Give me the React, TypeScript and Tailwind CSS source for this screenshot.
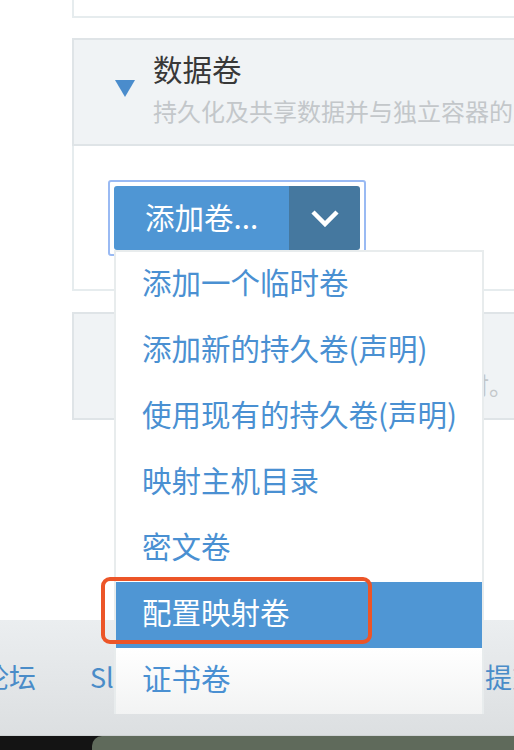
import React from "react";

const VOLUME_OPTIONS = [
  "添加一个临时卷",
  "添加新的持久卷(声明)",
  "使用现有的持久卷(声明)",
  "映射主机目录",
  "密文卷",
  "配置映射卷",
  "证书卷",
];

const ACTIVE = 5;

function Caret() {
  return (
    <svg width="20" height="17" viewBox="0 0 20 17" className="shrink-0" aria-hidden>
      <polygon points="0,0 20,0 10,17" fill="#4a8ccc" />
    </svg>
  );
}

function PanelHeader({ title, subtitle }: { title: string; subtitle: string }) {
  return (
    <div className="flex h-[104px] items-center bg-[#f0f3f5] pl-[41px] pb-[8px]">
      <Caret />
      <div className="ml-[18px] flex flex-col whitespace-nowrap">
        <span className="text-[29.5px] leading-[36px] text-[#383838]">{title}</span>
        <span className="mt-[9px] text-[24px] leading-[32px] text-[#c3c7ca]">{subtitle}</span>
      </div>
    </div>
  );
}

export default function App() {
  return (
    <div className="relative flex h-[750px] w-[514px] flex-col overflow-hidden bg-white font-['Noto_Sans_CJK_SC','Noto_Sans',sans-serif]">
      <main className="flex-1">
        <div className="ml-[72px] w-[520px]">
          {/* previous panel, top cut off */}
          <div className="h-[18px] border-b-2 border-l-2 border-[#e6ecee]" />

          {/* volumes panel */}
          <div className="mt-[20px]">
            <div className="border-2 border-[#dfe4e7]">
              <PanelHeader title="数据卷" subtitle="持久化及共享数据并与独立容器的生命周期分离。" />
            </div>
            <div className="border-b-2 border-l-2 border-[#e6ecee] pl-[34px] pt-[34px] pb-[33px]">
              <div className="inline-block rounded-[3px] border-2 border-[#9abaf3] p-[4px]">
                <div className="relative">
                  <div className="flex h-[64px] overflow-hidden rounded-[3px] text-white">
                    <div className="flex w-[175px] items-center bg-[#4f96d4] pl-[31px] pb-[4px] text-[29.5px] whitespace-nowrap">
                      添加卷...
                    </div>
                    <div className="flex w-[71px] items-center justify-center bg-[#45789f]">
                      <svg width="30" height="18" viewBox="0 0 30 18" fill="none" aria-hidden>
                        <polyline points="3,3 15,15 27,3" stroke="white" strokeWidth="4.5" />
                      </svg>
                    </div>
                  </div>

                  <div className="absolute left-0 top-full z-10 w-[370px] border-2 border-b-0 border-[#e8eced] bg-white">
                    {VOLUME_OPTIONS.map((label, i) => (
                      <div
                        key={label}
                        className={`flex h-[66px] items-center pl-[26px] pb-[8px] text-[29.5px] whitespace-nowrap ${
                          i === ACTIVE
                            ? "bg-[#4f96d4] text-white"
                            : i === VOLUME_OPTIONS.length - 1
                            ? "bg-gradient-to-b from-white to-[#f2f3f3] text-[#4a90d2]"
                            : "text-[#4a90d2]"
                        }`}
                      >
                        {label}
                      </div>
                    ))}
                  </div>
                </div>
              </div>
            </div>
          </div>

          {/* next panel, collapsed */}
          <div className="mt-[21px] border-2 border-[#dfe4e7]">
            <PanelHeader title="安全和主机设置" subtitle="配置容器的安全上下文和运行时。" />
          </div>
        </div>
      </main>

      {/* footer links */}
      <footer className="flex h-[115px] items-center bg-gradient-to-b from-[#ebeef0] to-[#dcdfe1] text-[27px] text-[#4a8cc8] whitespace-nowrap">
        <span className="-ml-[18px] w-[108px] shrink-0">论坛</span>
        <span className="w-[395px] shrink-0">Slack</span>
        <span className="shrink-0">提交问题</span>
      </footer>

      {/* strip of the page below */}
      <div className="flex h-[15px] border-t border-[#cfd3d4] bg-[#141414]">
        <div className="ml-[92px] flex-1 rounded-tl-[10px] bg-[#5f6a5b]" />
      </div>

      {/* annotation */}
      <div className="absolute left-[101px] top-[577px] z-20 h-[67px] w-[271px] rounded-[9px] border-[4px] border-solid border-[#ec5528]" />
    </div>
  );
}
